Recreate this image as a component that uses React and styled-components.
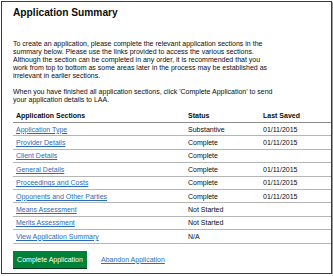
import React from "react";
import styled, { createGlobalStyle } from "styled-components";

const Global = createGlobalStyle`
  html, body { margin: 0; padding: 0; background: #fff; }
  body { font-family: "Liberation Sans", Arial, sans-serif; color: #0b0c0c; }
`;

const Frame = styled.div`
  box-sizing: border-box;
  width: 331px;
  height: 273px;
  margin: 1px 0 0 1px;
  border: 1px solid #3a3a3a;
  box-shadow: 1px 1px 0 #9a9a9a;
  padding: 0 0 0 11px;
  overflow: hidden;
  display: flex;
  flex-direction: column;
`;

const Title = styled.h1`
  margin: 5px 0 0;
  font-size: 10.2px;
  line-height: 12px;
  font-weight: bold;
`;

const Para = styled.p`
  margin: ${(p) => p.$top}px 0 0;
  font-size: 7px;
  line-height: 8px;
  max-width: 262px;
`;

const Table = styled.div`
  margin-top: 4px;
  width: 318px;
  display: flex;
  flex-direction: column;
`;

const Row = styled.div`
  display: grid;
  grid-template-columns: 172px 75px 1fr;
  align-items: center;
  box-sizing: border-box;
  height: ${(p) => (p.$head ? 15 : 13.4)}px;
  border-bottom: 1px solid ${(p) => (p.$head ? "#8c8c8c" : "#b5b5b5")};
  font-size: 7px;
  font-weight: ${(p) => (p.$head ? "bold" : "normal")};
`;

const Cell = styled.div`
  padding-left: 3px;
  white-space: nowrap;
`;

const Link = styled.a`
  color: #2b6cb6;
  text-decoration: underline;
  cursor: pointer;
  font-size: 7px;
`;

const Actions = styled.div`
  margin-top: 7px;
  display: flex;
  align-items: center;
  gap: 14px;
`;

const Button = styled.button`
  box-sizing: border-box;
  height: 17px;
  width: 74px;
  padding: 0;
  border: none;
  background: #00823b;
  box-shadow: 0 1px 0 #003618;
  color: #fff;
  font-family: "Liberation Sans", Arial, sans-serif;
  font-size: 7px;
`;

const rows = [
  ["Application Type", "Substantive", "01/11/2015"],
  ["Provider Details", "Complete", "01/11/2015"],
  ["Client Details", "Complete", ""],
  ["General Details", "Complete", "01/11/2015"],
  ["Proceedings and Costs", "Complete", "01/11/2015"],
  ["Opponents and Other Parties", "Complete", "01/11/2015"],
  ["Means Assessment", "Not Started", ""],
  ["Merits Assessment", "Not Started", ""],
  ["View Application Summary", "N/A", ""],
];

export default function App() {
  return (
    <>
      <Global />
      <Frame>
        <Title>Application Summary</Title>
        <Para $top={21}>
          To create an application, please complete the relevant application
          sections in the summary below. Please use the links provided to
          access the various sections. Although the section can be completed
          in any order, it is recommended that you work from top to bottom as
          some areas later in the process may be established as irrelevant in
          earlier sections.
        </Para>
        <Para $top={8}>
          When you have finished all application sections, click 'Complete
          Application' to send your application details to LAA.
        </Para>
        <Table>
          <Row $head>
            <Cell>Application Sections</Cell>
            <Cell>Status</Cell>
            <Cell>Last Saved</Cell>
          </Row>
          {rows.map(([name, status, saved]) => (
            <Row key={name}>
              <Cell>
                <Link>{name}</Link>
              </Cell>
              <Cell>{status}</Cell>
              <Cell>{saved}</Cell>
            </Row>
          ))}
        </Table>
        <Actions>
          <Button>Complete Application</Button>
          <Link>Abandon Application</Link>
        </Actions>
      </Frame>
    </>
  );
}
